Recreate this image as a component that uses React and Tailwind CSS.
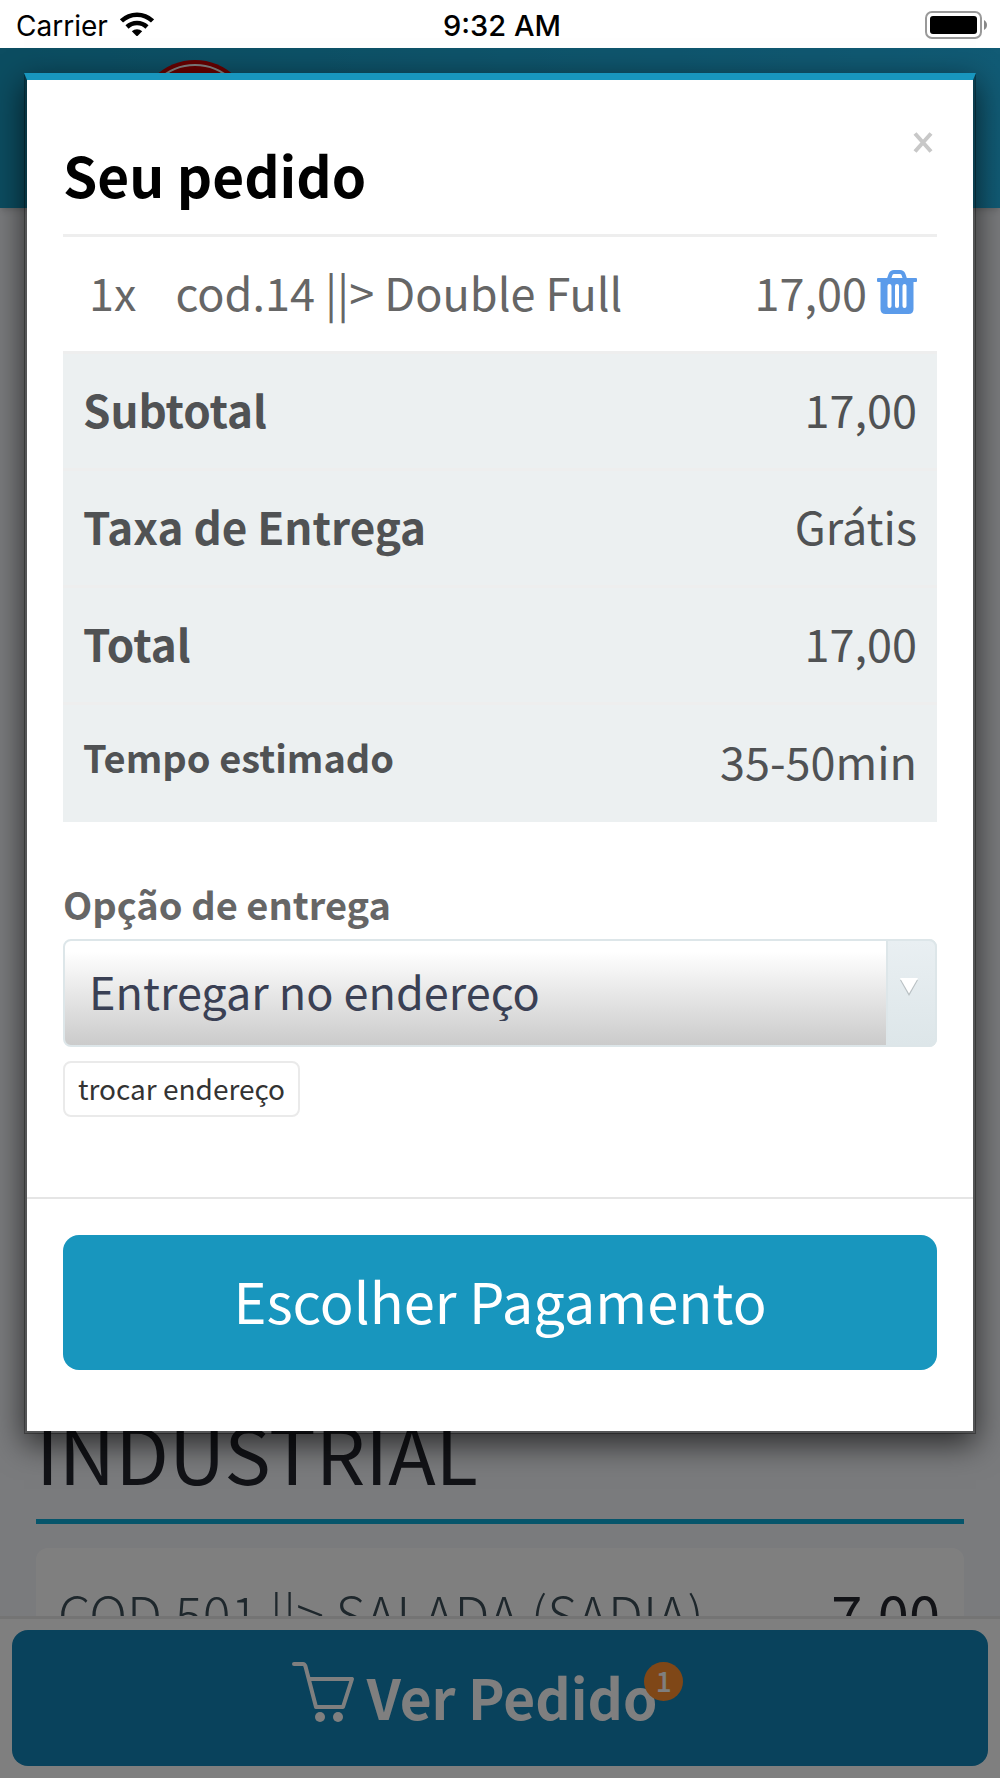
import { useState } from "react";

const totals = [
  { label: "Subtotal", value: "17,00" },
  { label: "Taxa de Entrega", value: "Grátis" },
  { label: "Total", value: "17,00" },
  { label: "Tempo estimado", value: "35-50min", small: true },
];

function StatusBar() {
  return (
    <div className="grid h-12 grid-cols-3 items-center bg-white pt-1 pl-4 pr-3 font-['Inter',sans-serif] text-[28px] leading-8 text-black">
      <div className="flex items-center gap-3">
        <span>Carrier</span>
        <svg className="mb-1 h-6 w-[34px]" viewBox="0 0 34 24" fill="none" stroke="#000" strokeWidth="4.500">
          <path d="M1.500 9a22.400 22.400 0 0 1 31 0" />
          <path d="M7 15a14.600 14.600 0 0 1 20 0" />
          <path d="M17 24.500l-5.200-5.200a7.500 7.500 0 0 1 10.400 0z" fill="#000" stroke="none" />
        </svg>
      </div>
      <span className="text-center text-[29px] font-medium">9:32 AM</span>
      <svg className="mb-1 h-8 w-[64px] justify-self-end" viewBox="0 0 64 32">
        <rect x="2" y="4" width="55" height="26" rx="6" fill="none" stroke="#999" strokeWidth="2" />
        <rect x="6" y="8" width="47" height="18" rx="3" fill="#000" />
        <path d="M60 12v10c2-1 3-3 3-5s-1-4-3-5z" fill="#888" />
      </svg>
    </div>
  );
}

function CartIcon() {
  return (
    <svg className="mb-2 h-[62px] w-[64px]" viewBox="0 0 64 62" fill="none" stroke="#fff" strokeWidth="4" strokeLinecap="round" strokeLinejoin="round">
      <path d="M3 3h9c1.500 0 2 1 2.500 2.500L25 46h27l9-28H18" />
      <circle cx="29" cy="56" r="5" fill="#fff" stroke="none" />
      <circle cx="47" cy="56" r="5" fill="#fff" stroke="none" />
    </svg>
  );
}

function StorePage() {
  return (
    <div className="flex flex-1 flex-col bg-[#f4f6fa]">
      <header className="h-40 bg-linear-to-r from-[#189ac2] to-[#22b6ea] shadow-md">
        <svg className="mt-3 ml-[138px] h-[114px] w-[114px]" viewBox="0 0 114 114">
          <circle cx="57" cy="57" r="57" fill="#cc0000" />
          <circle cx="57" cy="57" r="52" fill="none" stroke="#fff" strokeWidth="2" />
        </svg>
      </header>

      <main className="flex flex-1 flex-col justify-end overflow-hidden px-9">
        <h2 className="border-b-5 border-[#0caad6] pb-[18px] text-[78px] leading-[100px] text-[#24262e]">INDUSTRIAL</h2>
        <div className="mt-6 -mb-[72px] flex h-[140px] shrink-0 justify-between rounded-xl bg-white pt-[30px] pr-6 pl-[22px] text-[52px] leading-[70px]">
          <span className="font-light text-[#3c4e58]">COD.501 ||&gt; SALADA (SADIA)</span>
          <span className="text-[56px] text-[#24262e]">7,00</span>
        </div>
      </main>

      <footer className="z-0 border-t-3 border-[#e8e8e8] bg-white px-3 pt-[11px] pb-3">
        <button className="flex h-[136px] w-full items-center justify-center gap-3 rounded-2xl bg-[#1284b8] pr-[52px] pb-1 text-[55px] leading-[60px] font-bold text-white">
          <CartIcon />
          <span className="relative">
            Ver Pedido
            <span className="absolute -top-1 -right-[26px] flex size-[39px] items-center justify-center rounded-full bg-[#ff8e2e] pb-1 text-[28px] leading-8 font-medium">1</span>
          </span>
        </button>
      </footer>
    </div>
  );
}

function OrderTable({ onRemove }) {
  return (
    <table className="w-full border-collapse text-[45px] leading-[60px]">
      <tbody>
        <tr className="border-t-3 border-[#eee] text-[#666]">
          <td className="pt-[25px] pb-[29px] pl-[26px]">
            1x<span className="ml-[39px]">cod.14 ||&gt; Double Full</span>
          </td>
          <td className="pt-[25px] pb-[29px] pr-5">
            <div className="flex items-center justify-end gap-[10px]">
              17,00
              <button aria-label="Remover item" onClick={onRemove}>
                <svg className="h-11 w-10" viewBox="0 0 40 44">
                  <path d="M12 9l1.500-4.500Q14.500 2 17 2h6q2.500 0 3.500 2.500L28 9" fill="none" stroke="#5b9bea" strokeWidth="4" />
                  <rect x="0" y="8" width="40" height="4" rx="1" fill="#5b9bea" />
                  <path d="M3.500 10h33v29q0 5-5 5h-23q-5 0-5-5z" fill="#5b9bea" />
                  <path d="M12.500 16v20M20 16v20M27.500 16v20" stroke="#fff" strokeWidth="4" strokeLinecap="round" />
                </svg>
              </button>
            </div>
          </td>
        </tr>
        {totals.map((row) => (
          <tr key={row.label} className="border-t-3 border-[#eee] bg-[#ecf0f1] text-[#505254] last:h-[118px]">
            <th
              scope="row"
              className={
                row.small
                  ? "pt-[25px] pb-[29px] pl-5 text-left align-top text-[38px] leading-[54px] font-bold"
                  : "pt-[25px] pb-[29px] pl-5 text-left align-top text-[44px] font-bold"
              }
            >
              {row.label}
            </th>
            <td className="pt-[25px] pb-[29px] pr-5 text-right">{row.value}</td>
          </tr>
        ))}
      </tbody>
    </table>
  );
}

function OrderModal() {
  const [option, setOption] = useState("endereco");

  return (
    <div
      role="dialog"
      aria-labelledby="order-title"
      className="absolute inset-x-6 top-[25px] border-3 border-t-7 border-black/30 border-t-[#1896be] bg-white bg-clip-padding shadow-[0_10px_30px_rgba(0,0,0,0.65)]"
    >
      <div className="px-9">
        <div className="flex items-start justify-between pt-12 pb-[30px]">
          <h1 id="order-title" className="mt-4 text-[55px] leading-[60px] font-bold text-black">Seu pedido</h1>
          <button aria-label="Fechar" className="p-1">
            <svg className="h-[21px] w-5" viewBox="0 0 20 21" stroke="#c8c8c8" strokeWidth="4">
              <path d="M2 1.500l16 18M18 1.500l-16 18" />
            </svg>
          </button>
        </div>

        <OrderTable />

        <div className="flex flex-col items-start pt-[55px] pb-20">
          <label htmlFor="delivery" className="mb-2 text-[38px] leading-[54px] font-bold text-[#666]">
            Opção de entrega
          </label>
          <div className="relative w-full">
            <select
              id="delivery"
              value={option}
              onChange={(e) => setOption(e.target.value)}
              className="block h-[108px] w-full appearance-none rounded-lg border-2 border-[#dde6e9] bg-linear-to-b from-white from-10% to-[#cbcbcb] pr-16 pb-1 pl-6 text-[45px] leading-[60px] text-[#3a4054]"
            >
              <option value="endereco">Entregar no endereço</option>
              <option value="balcao">Retirar no balcão</option>
            </select>
            <span className="pointer-events-none absolute inset-y-0 right-0 flex w-[51px] items-center rounded-r-lg border-2 border-[#dde6e9] bg-linear-to-b from-[#e9eff2] to-[#dde6e9] pl-3">
              <svg className="mb-3 h-[18px] w-[18px]" viewBox="0 0 18 18">
                <path d="M0 2h18L9 18z" fill="#b9c0c3" />
                <path d="M0 0h18L9 15.500z" fill="#fff" />
              </svg>
            </span>
          </div>
          <button className="mt-[14px] h-14 rounded-lg border-2 border-[#eaeaea] px-[13px] pb-[2px] text-[28px] leading-10 text-[#333]">
            trocar endereço
          </button>
        </div>
      </div>

      <div className="border-t-2 border-[#e5e5e5] px-9 pt-9 pb-[61px]">
        <button className="h-[135px] w-full rounded-2xl bg-[#1896be] pb-1 text-[56px] leading-[60px] text-white">
          Escolher Pagamento
        </button>
      </div>
    </div>
  );
}

export default function App() {
  return (
    <div className="flex min-h-screen flex-col font-['Noto_Sans_CJK_JP',sans-serif]">
      <StatusBar />
      <div className="relative flex flex-1 flex-col">
        <StorePage />
        <div className="absolute inset-0 bg-black/50" />
        <OrderModal />
      </div>
    </div>
  );
}
